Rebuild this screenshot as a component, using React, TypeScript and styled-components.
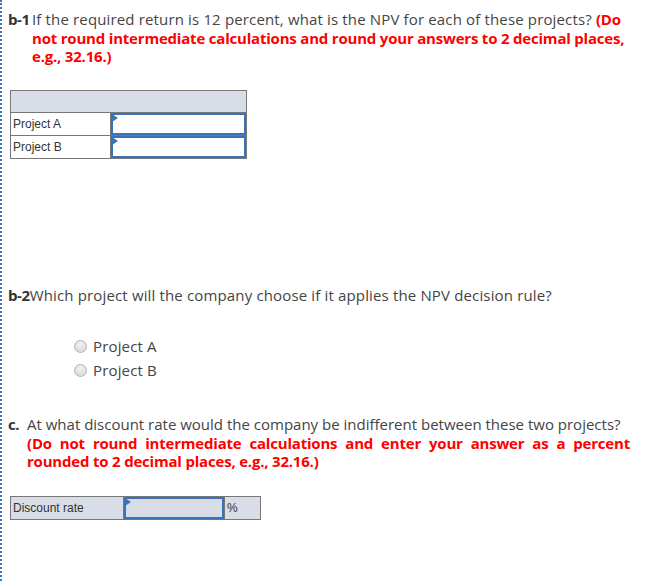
import React from 'react'
import styled, { createGlobalStyle } from 'styled-components'

const Global = createGlobalStyle`
  html, body { margin: 0; padding: 0; background: #fff; }
  body { font-family: "Open Sans", "Lato", sans-serif; color: #444; }
`

const Page = styled.div`
  width: 657px;
  min-height: 581px;
  box-sizing: border-box;
  border-left: 2px dotted #3b73b9;
  padding: 10px 0 0 6px;
`

const Question = styled.div<{ $top?: number }>`
  display: flex;
  width: 622px;
  margin-top: ${p => p.$top ?? 0}px;
  font-size: 15px;
  line-height: 18.5px;
`

const Tag = styled.span<{ $w?: number }>`
  flex: 0 0 ${p => (p.$w ? `${p.$w}px` : 'auto')};
  white-space: nowrap;
  font-weight: 700;
  letter-spacing: -0.4px;
  color: #333;
`

const Body = styled.div`
  flex: 1;
  min-width: 0;
  letter-spacing: 0.15px;
`

const Lead = styled.div`
  white-space: nowrap;
  letter-spacing: 0;
`

const Warn = styled.span`
  color: #f00;
  font-weight: 700;
  letter-spacing: -0.2px;
`

const WarnBlock = styled.div`
  color: #f00;
  font-weight: 700;
  letter-spacing: -0.2px;
  text-align: justify;
`

const Grid = styled.table<{ $top: number; $bg?: boolean }>`
  border-collapse: collapse;
  margin: ${p => p.$top}px 0 0 2px;
  font-family: "Liberation Sans", Arial, sans-serif;
  font-size: 12px;
  color: #333;
  background: ${p => (p.$bg ? '#d9dde8' : '#fff')};
`

const Cell = styled.td<{ $w: number; $head?: boolean }>`
  width: ${p => p.$w}px;
  height: 22px;
  padding: 0 2px;
  box-sizing: border-box;
  border: 1px solid #777;
  background: ${p => (p.$head ? '#d9dde8' : 'transparent')};
`

const InputCell = styled.td<{ $w: number }>`
  width: ${p => p.$w}px;
  height: 22px;
  padding: 0;
  border: 1px solid #777;
`

const Entry = styled.div<{ $fill?: boolean }>`
  position: relative;
  height: 22px;
  box-sizing: border-box;
  border: 2px solid #3b73b9;
  background: ${p => (p.$fill ? '#d9dde8' : '#fff')};
  &::before {
    content: '';
    position: absolute;
    left: -1px;
    top: -1px;
    border-left: 6px solid #3b73b9;
    border-top: 4px solid transparent;
    border-bottom: 4px solid transparent;
  }
`

const Options = styled.div`
  display: flex;
  flex-direction: column;
  gap: 5px;
  margin: 33px 0 0 66px;
`

const Option = styled.label`
  display: flex;
  align-items: center;
  gap: 6px;
  font-size: 15px;
  line-height: 19px;
  letter-spacing: 0.15px;
  color: #444;
`

const Radio = styled.span`
  width: 11px;
  height: 11px;
  border-radius: 50%;
  border: 1px solid #b5b5b5;
  background: radial-gradient(circle at 50% 35%, #f4f4f4, #d2d2d2);
`

export default function App() {
  return (
    <>
      <Global />
      <Page>
        <Question>
          <Tag $w={24}>b-1</Tag>
          <Body>
            If the required return is 12 percent, what is the NPV for each of these projects?{' '}
            <Warn>(Do not round intermediate calculations and round your answers to 2 decimal places, e.g., 32.16.)</Warn>
          </Body>
        </Question>

        <Grid $top={24}>
          <tbody>
            <tr>
              <Cell $w={235} $head colSpan={2} />
            </tr>
            {['Project A', 'Project B'].map(name => (
              <tr key={name}>
                <Cell $w={100}>{name}</Cell>
                <InputCell $w={135}>
                  <Entry />
                </InputCell>
              </tr>
            ))}
          </tbody>
        </Grid>

        <Question $top={127}>
          <Tag>b-2</Tag>
          <Body>Which project will the company choose if it applies the NPV decision rule?</Body>
        </Question>

        <Options>
          <Option><Radio />Project A</Option>
          <Option><Radio />Project B</Option>
        </Options>

        <Question $top={35}>
          <Tag $w={19}>c.</Tag>
          <Body>
            <Lead>At what discount rate would the company be indifferent between these two projects?</Lead>
            <WarnBlock>
              (Do not round intermediate calculations and enter your answer as a percent rounded to 2 decimal places, e.g., 32.16.)
            </WarnBlock>
          </Body>
        </Question>

        <Grid $top={25} $bg>
          <tbody>
            <tr>
              <Cell $w={113}>Discount rate</Cell>
              <InputCell $w={100}>
                <Entry $fill />
              </InputCell>
              <Cell $w={36}>%</Cell>
            </tr>
          </tbody>
        </Grid>
      </Page>
    </>
  )
}
